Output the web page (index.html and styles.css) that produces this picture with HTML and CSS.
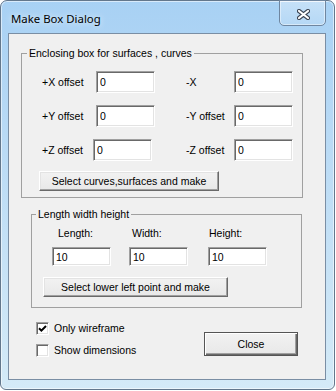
FILE: index.html
```html
<!DOCTYPE html>
<html lang="en">
<head>
  <meta charset="UTF-8">
  <title>Make Box Dialog</title>
  <link rel="stylesheet" href="styles.css">
</head>
<body>
  <div class="window">
    <!-- Title bar -->
    <div class="titlebar">
      <span class="title">Make Box Dialog</span>
      <button class="close-x" aria-label="Close">
        <svg width="13" height="11" viewBox="0 0 13 11">
          <path d="M2 2 L11 9 M11 2 L2 9" stroke="#3b4452" stroke-width="4.2" stroke-linecap="round" fill="none"/>
          <path d="M2 2 L11 9 M11 2 L2 9" stroke="#fff" stroke-width="2.2" stroke-linecap="round" fill="none"/>
        </svg>
      </button>
    </div>

    <div class="client">
      <!-- Offsets around selected geometry -->
      <fieldset class="group group-offsets">
        <legend>Enclosing box for surfaces , curves</legend>
        <div class="offsets">
          <label>+X offset</label><input class="field" type="text" value="0">
          <label>-X</label><input class="field" type="text" value="0">
          <label>+Y offset</label><input class="field" type="text" value="0">
          <label>-Y offset</label><input class="field" type="text" value="0">
          <label>+Z offset</label><input class="field shift-left" type="text" value="0">
          <label>-Z offset</label><input class="field" type="text" value="0">
        </div>
        <button class="btn btn-curves">Select curves,surfaces and make</button>
      </fieldset>

      <!-- Fixed size box -->
      <fieldset class="group group-dims">
        <legend>Length width height</legend>
        <div class="dims">
          <span class="dim-label">Length:</span>
          <span class="dim-label">Width:</span>
          <span class="dim-label">Height:</span>
          <input class="field" type="text" value="10">
          <input class="field" type="text" value="10">
          <input class="field" type="text" value="10">
        </div>
        <button class="btn btn-point">Select lower left point and make</button>
      </fieldset>

      <div class="bottom">
        <div class="checks">
          <label class="check-row">
            <span class="checkbox">
              <svg width="9" height="9" viewBox="0 0 9 9"><path d="M1 4.2 L3.4 6.6 L8 2" stroke="#000" stroke-width="2" fill="none"/></svg>
            </span>
            Only wireframe
          </label>
          <label class="check-row">
            <span class="checkbox"></span>
            Show dimensions
          </label>
        </div>
        <button class="btn btn-close">Close</button>
      </div>
    </div>
  </div>
</body>
</html>
```

FILE: styles.css
```css
* {
  box-sizing: border-box;
}
body {
  margin: 0;
  background: #fff;
  font-family: "Liberation Sans", Arial, sans-serif;
}

/* Window frame (Aero style) */
.window {
  width: 335px;
  height: 390px;
  border: 1px solid #63778c;
  border-radius: 7px 7px 6px 6px;
  background: linear-gradient(#a8d1f4, #b9daf5 35%, #d4eaf7);
  box-shadow: inset 0 0 0 1px rgba(255, 255, 255, 0.55);
  padding: 0 8px 9px 7px;
  display: flex;
  flex-direction: column;
}
.titlebar {
  height: 32px;
  display: flex;
  justify-content: space-between;
  align-items: flex-start;
}
.title {
  font-family: "Noto Sans", "Open Sans", sans-serif;
  font-size: 11.4px;
  line-height: 16px;
  padding: 10px 0 0 3px;
  color: #000;
  text-shadow: 0 0 6px rgba(255, 255, 255, 0.9);
}
.close-x {
  width: 47px;
  height: 26px;
  margin-top: -1px;
  padding: 3px 0 0 2px;
  border: 1px solid #6f86a0;
  border-radius: 0 0 5px 5px;
  background: linear-gradient(rgba(255, 255, 255, 0.35), rgba(255, 255, 255, 0.12));
  box-shadow: inset 0 0 0 1px rgba(255, 255, 255, 0.45);
  display: flex;
  align-items: center;
  justify-content: center;
}

/* Client area */
.client {
  flex: 1;
  border: 1px solid #7a8ea4;
  background: #f0f0f0;
  font-size: 10.5px;
  line-height: 13px;
  color: #000;
}

/* Group boxes */
.group {
  margin: 0;
  min-width: 0;
  border: 1px solid #a0a0a0;
}
.group legend {
  padding: 0 2px;
  line-height: 13px;
}
.group-offsets {
  margin: 13px 0 0 12px;
  width: 282px;
  padding: 11px 0 6px 0;
}
.group-offsets legend {
  margin-left: 5px;
}
.group-dims {
  margin: 10px 0 0 22px;
  width: 271px;
  padding: 6px 0 10px 0;
}
.group-dims legend {
  margin-left: 4px;
}

.offsets {
  display: grid;
  grid-template-columns: 54px 90px 48px 59px;
  row-gap: 12px;
  padding-left: 20px;
  align-items: center;
}
.dims {
  display: grid;
  grid-template-columns: 77px 79px 59px;
  row-gap: 7px;
  padding-left: 20px;
}
.dim-label:nth-child(1) { padding-left: 6px; }
.dim-label:nth-child(2) { padding-left: 3px; }
.dim-label:nth-child(3) { padding-left: 1px; }

/* Sunken edit boxes */
.field {
  width: 59px;
  height: 22px;
  margin: 0;
  padding: 0 0 0 3px;
  font-family: inherit;
  font-size: 10.5px;
  color: #000;
  background: #fff;
  border: 1px solid;
  border-color: #a0a0a0 #fff #fff #a0a0a0;
  box-shadow: inset 1px 1px #696969, inset -1px -1px #e3e3e3;
  outline: none;
}
.dims .field {
  height: 19px;
}
.shift-left {
  margin-left: -3px;
}

/* Raised push buttons */
.btn {
  display: block;
  padding: 0;
  font-family: inherit;
  font-size: 10.5px;
  color: #000;
  background: linear-gradient(#f2f2f2, #e8e8e8);
  border: 1px solid;
  border-color: #fff #696969 #696969 #fff;
  box-shadow: inset -1px -1px #a0a0a0, inset 1px 1px #e3e3e3;
}
.btn-curves {
  margin: 10px 0 0 17px;
  width: 180px;
  height: 20px;
}
.btn-point {
  margin: 11px 0 0 11px;
  width: 185px;
  height: 20px;
}

/* Checkboxes and Close */
.bottom {
  display: flex;
  margin-top: 14px;
  padding-left: 27px;
}
.checks {
  width: 168px;
  display: flex;
  flex-direction: column;
  gap: 9px;
}
.check-row {
  display: flex;
  align-items: center;
  gap: 5px;
  height: 13px;
}
.checkbox {
  width: 13px;
  height: 13px;
  background: #fff;
  border: 1px solid;
  border-color: #a0a0a0 #fff #fff #a0a0a0;
  box-shadow: inset 1px 1px #696969, inset -1px -1px #e3e3e3;
  display: flex;
  align-items: center;
  justify-content: center;
}
.btn-close {
  margin-top: 10px;
  width: 94px;
  height: 24px;
  border: 1px solid #555;
  box-shadow: inset 1px 1px #fff, inset -1px -1px #696969, inset -2px -2px #a0a0a0;
}
```
